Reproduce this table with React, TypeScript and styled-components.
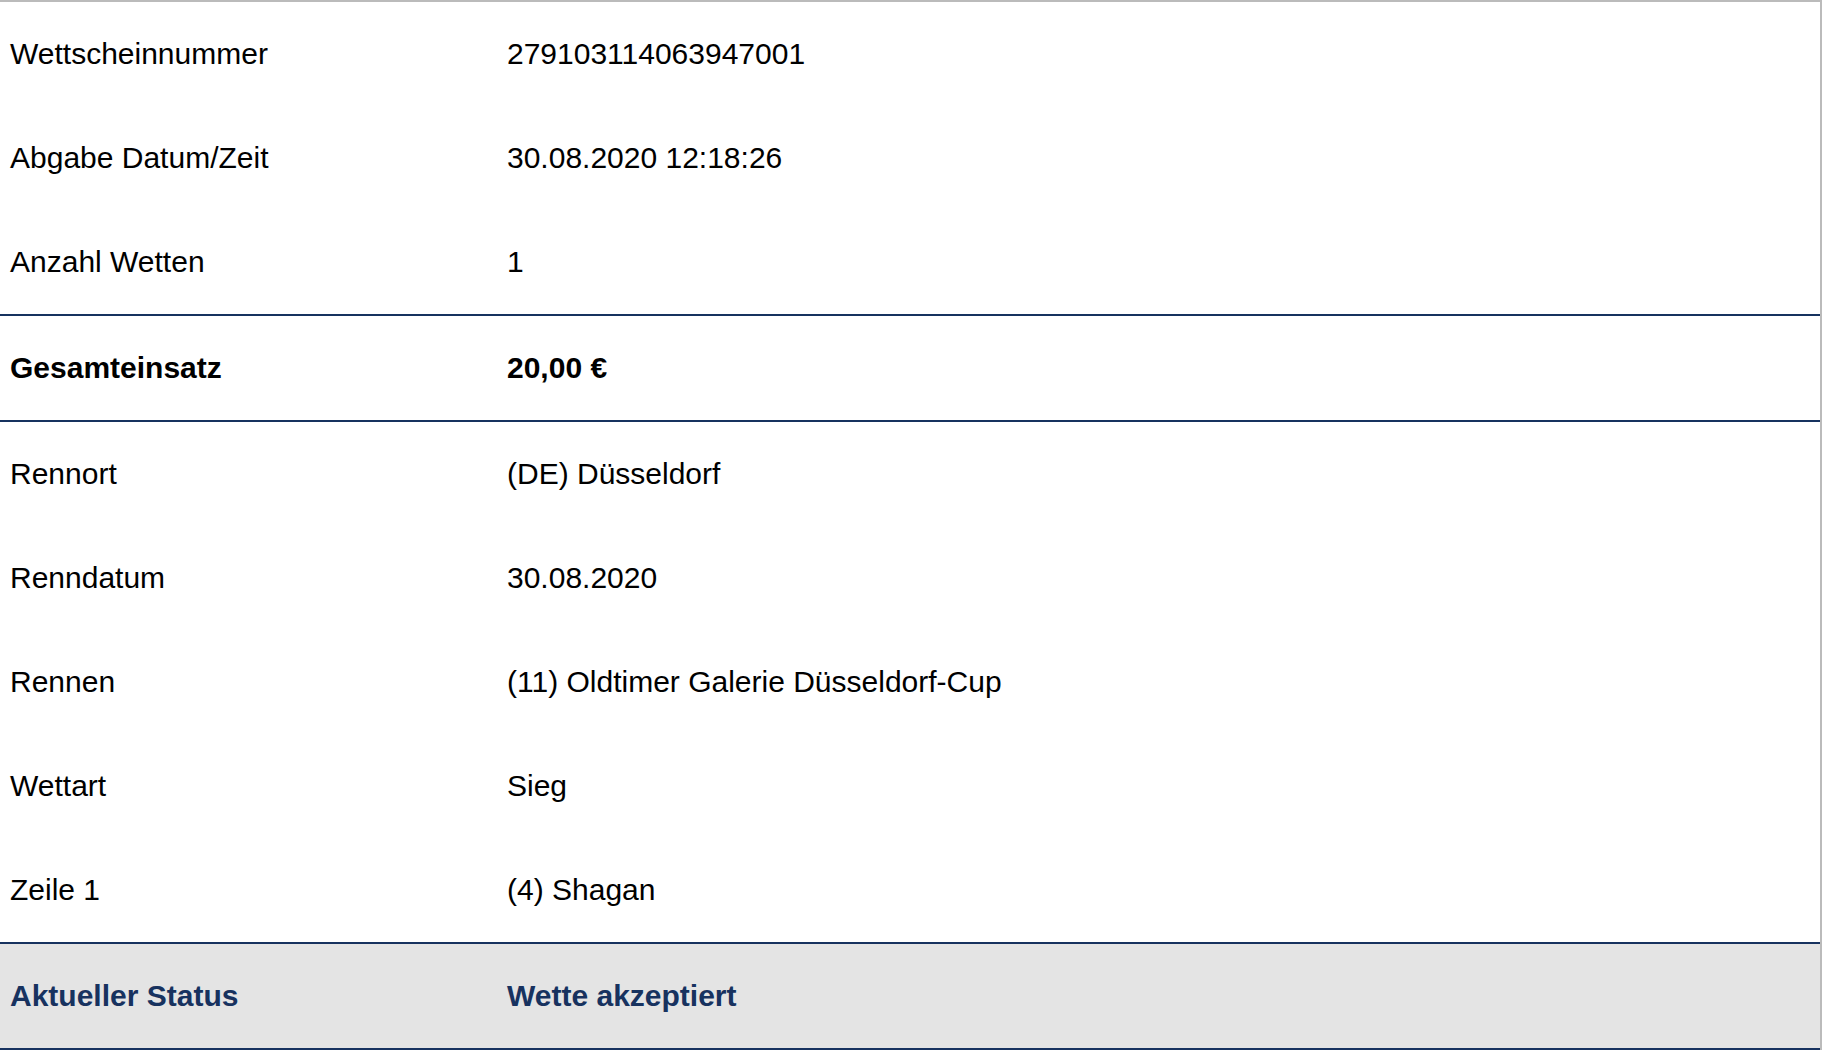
import React from "react";
import styled, { createGlobalStyle } from "styled-components";

const GlobalStyle = createGlobalStyle`
  html, body {
    margin: 0;
    padding: 0;
    background: #ffffff;
  }
  body {
    font-family: "Liberation Sans", Arial, Helvetica, sans-serif;
  }
`;

const Table = styled.div`
  width: 1822px;
  box-sizing: border-box;
  border-top: 2px solid #bbbbbb;
  border-right: 2px solid #bbbbbb;
  display: flex;
  flex-direction: column;
`;

type Variant = "normal" | "total" | "status";

const Row = styled.div<{ $variant?: Variant; $divider?: boolean }>`
  display: grid;
  grid-template-columns: 497px 1fr;
  align-items: center;
  height: 104px;
  padding-left: 10px;
  box-sizing: content-box;
  background: ${(p) => (p.$variant === "status" ? "#e4e4e4" : "transparent")};
  border-bottom: ${(p) => (p.$divider ? "2px solid #17325f" : "none")};
  font-size: 30px;
  font-weight: ${(p) => (p.$variant === "normal" || !p.$variant ? 400 : 700)};
  color: ${(p) => (p.$variant === "status" ? "#17325f" : "#000000")};
`;

const Label = styled.span`
  white-space: nowrap;
`;

const Value = styled.span`
  white-space: nowrap;
`;

type Item = { label: string; value: string; variant?: Variant; divider?: boolean };

const items: Item[] = [
  { label: "Wettscheinnummer", value: "279103114063947001" },
  { label: "Abgabe Datum/Zeit", value: "30.08.2020 12:18:26" },
  { label: "Anzahl Wetten", value: "1", divider: true },
  { label: "Gesamteinsatz", value: "20,00 €", variant: "total", divider: true },
  { label: "Rennort", value: "(DE) Düsseldorf" },
  { label: "Renndatum", value: "30.08.2020" },
  { label: "Rennen", value: "(11) Oldtimer Galerie Düsseldorf-Cup" },
  { label: "Wettart", value: "Sieg" },
  { label: "Zeile 1", value: "(4) Shagan", divider: true },
  { label: "Aktueller Status", value: "Wette akzeptiert", variant: "status", divider: true },
];

export default function App() {
  return (
    <>
      <GlobalStyle />
      <Table>
        {items.map((it) => (
          <Row key={it.label} $variant={it.variant ?? "normal"} $divider={it.divider}>
            <Label>{it.label}</Label>
            <Value>{it.value}</Value>
          </Row>
        ))}
      </Table>
    </>
  );
}
